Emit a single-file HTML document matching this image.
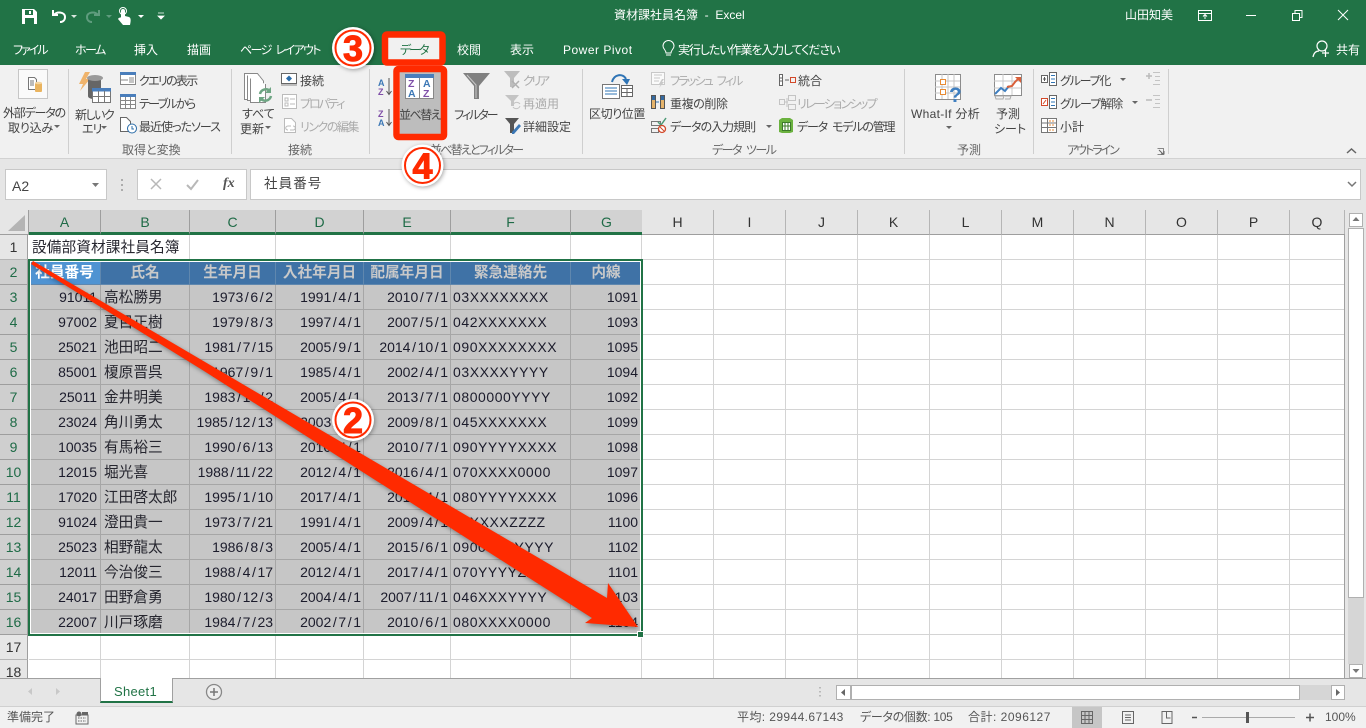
<!DOCTYPE html>
<html lang="ja"><head><meta charset="utf-8"><title>資材課社員名簿 - Excel</title>
<style>
html,body{margin:0;padding:0;width:1366px;height:728px;overflow:hidden;background:#e6e6e6}
body{position:relative;font-family:"Liberation Sans","Noto Sans CJK JP",sans-serif;font-size:12px;color:#444}
.b{position:absolute}
.t{position:absolute;white-space:nowrap;line-height:16px;margin-top:1px;font-family:"Liberation Sans","Noto Sans CJK JP",sans-serif;font-feature-settings:"palt";color:#444;font-size:12px}
.w{color:#fff}.g{color:#ababab}.c{color:#666}
.ch{position:absolute;top:210px;height:25px;line-height:24px;text-align:center;font-size:14px;color:#333;background:#e6e6e6;border-right:1px solid #b5b5b5;box-sizing:border-box;border-bottom:1px solid #9e9e9e}
.ch.s{background:#d2d2d2;color:#1f6b47;border-bottom:3px solid #217346;border-right-color:#9e9e9e}
.rh{position:absolute;left:0;width:28px;height:25px;line-height:24px;text-align:center;font-size:14px;color:#333;background:#e6e6e6;border-bottom:1px solid #b5b5b5;border-right:1px solid #9e9e9e;box-sizing:border-box}
.rh.s{background:#cfcfcf;color:#1f6b47;border-bottom-color:#9e9e9e}
table{position:absolute;left:29px;top:0;border-collapse:separate;border-spacing:0;table-layout:fixed;width:1316px}
td{height:25px;padding:0 3px;box-sizing:border-box;border-right:1px solid #d4d4d4;border-bottom:1px solid #d4d4d4;font-size:14px;line-height:24px;white-space:nowrap;overflow:hidden;color:#1b1b2b;text-align:left}
tr.d td.x{background:#c6c6c6;border-color:#a6a6a6}
td.n{text-align:right;padding-right:2px}
td.m{padding-right:3px}
td.f{padding-left:2px;letter-spacing:.55px}
td.j{font-size:14.67px;font-family:"Liberation Sans","Noto Sans CJK JP",sans-serif;line-height:22px;padding-top:2px;color:#26262f}
td i{font-style:normal;padding:0 1.6px}
tr.h td.u{background:#3f72a6;border-color:#5f87ae;font-weight:bold;color:#c9c9c9;text-align:center;font-size:14.67px;padding:2px 0 0;line-height:22px}
tr.h td.a{background:#4f93d2;color:#fff}
.v{position:absolute;width:1px;background:#cfcfcf}
</style></head><body>

<div class="b" style="left:0;top:0;width:1366px;height:65px;background:#217346"></div>
<div class="b" style="left:0;top:65px;width:1366px;height:93px;background:#f1f1f1;border-bottom:1px solid #d2d2d2"></div>
<div class="b" style="left:0;top:159px;width:1366px;height:51px;background:#e6e6e6"></div>
<div class="b" style="left:388px;top:37px;width:52px;height:28px;background:#f1f1f1"></div>
<div class="v" style="left:68px;top:69px;height:85px"></div>
<div class="v" style="left:231px;top:69px;height:85px"></div>
<div class="v" style="left:369px;top:69px;height:85px"></div>
<div class="v" style="left:582px;top:69px;height:85px"></div>
<div class="v" style="left:904px;top:69px;height:85px"></div>
<div class="v" style="left:1033px;top:69px;height:85px"></div>
<div class="v" style="left:1168px;top:69px;height:85px"></div>

<!-- title bar text -->
<div class="t w" style="left:614px;top:7px;margin-top:0">資材課社員名簿&nbsp; -&nbsp; Excel</div>
<div class="t w" style="left:1125px;top:7px;margin-top:0">山田知美</div>
<div class="t w" style="left:13px;top:41px;letter-spacing:-2px">ファイル</div>
<div class="t w" style="left:75px;top:41px;letter-spacing:-1.5px">ホーム</div>
<div class="t w" style="left:134px;top:41px">挿入</div>
<div class="t w" style="left:187px;top:41px">描画</div>
<div class="t w" style="left:240px;top:41px;letter-spacing:-1.6px;word-spacing:3px">ページ レイアウト</div>
<div class="t" style="left:400px;top:41px;color:#217346;letter-spacing:-2px">データ</div>
<div class="t w" style="left:457px;top:41px">校閲</div>
<div class="t w" style="left:510px;top:41px">表示</div>
<div class="t w" style="left:563px;top:41px;letter-spacing:.5px">Power Pivot</div>
<div class="t w" style="left:678px;top:41px;letter-spacing:-1.1px">実行したい作業を入力してください</div>
<div class="t w" style="left:1336px;top:41px">共有</div>

<!-- ribbon text -->
<div class="b" style="left:400px;top:72px;width:41px;height:62px;background:#bdbdbd"></div>
<div class="t" style="left:3px;top:104px;letter-spacing:-1.2px">外部データの</div>
<div class="t" style="left:8px;top:119px;letter-spacing:-.2px">取り込み</div>
<div class="t" style="left:75px;top:106px;letter-spacing:-1.5px">新しいク</div>
<div class="t" style="left:82px;top:120px;letter-spacing:-1px">エリ</div>
<div class="t" style="left:139px;top:72px;letter-spacing:-1.7px">クエリの表示</div>
<div class="t" style="left:139px;top:95px;letter-spacing:-1.7px">テーブルから</div>
<div class="t" style="left:139px;top:118px;letter-spacing:-1px">最近使ったソース</div>
<div class="t c" style="left:122px;top:141px">取得と変換</div>
<div class="t" style="left:242px;top:105px">すべて</div>
<div class="t" style="left:240px;top:120px">更新</div>
<div class="t" style="left:300px;top:72px">接続</div>
<div class="t g" style="left:300px;top:95px;letter-spacing:-2px">プロパティ</div>
<div class="t g" style="left:300px;top:118px;letter-spacing:-1.5px">リンクの編集</div>
<div class="t c" style="left:288px;top:141px">接続</div>
<div class="t" style="left:399px;top:106px;letter-spacing:-1.5px">並べ替え</div>
<div class="t" style="left:454px;top:106px;letter-spacing:-2px">フィルター</div>
<div class="t g" style="left:523px;top:72px;letter-spacing:-2.4px">クリア</div>
<div class="t g" style="left:523px;top:95px">再適用</div>
<div class="t" style="left:523px;top:118px">詳細設定</div>
<div class="t c" style="left:430px;top:141px;letter-spacing:-1.8px">並べ替えとフィルター</div>
<div class="t" style="left:589px;top:105px;letter-spacing:-.4px">区切り位置</div>
<div class="t g" style="left:670px;top:72px;letter-spacing:-1.8px;word-spacing:3px">フラッシュ フィル</div>
<div class="t" style="left:670px;top:95px;letter-spacing:-.4px">重複の削除</div>
<div class="t" style="left:670px;top:118px;letter-spacing:-1px">データの入力規則</div>
<div class="t" style="left:798px;top:72px">統合</div>
<div class="t g" style="left:797px;top:95px;letter-spacing:-1.7px">リレーションシップ</div>
<div class="t" style="left:797px;top:118px;letter-spacing:-1.2px;word-spacing:3px">データ モデルの管理</div>
<div class="t c" style="left:712px;top:141px;letter-spacing:-1.5px;word-spacing:3px">データ ツール</div>
<div class="t" style="left:911px;top:105px;letter-spacing:.3px">What-If 分析</div>
<div class="t" style="left:996px;top:105px">予測</div>
<div class="t" style="left:994px;top:120px">シート</div>
<div class="t c" style="left:957px;top:141px">予測</div>
<div class="t" style="left:1060px;top:72px;letter-spacing:-1.2px">グループ化</div>
<div class="t" style="left:1060px;top:95px;letter-spacing:-1px">グループ解除</div>
<div class="t" style="left:1060px;top:118px">小計</div>
<div class="t c" style="left:1067px;top:141px;letter-spacing:-2px">アウトライン</div>

<!-- formula bar -->
<div class="b" style="left:5px;top:169px;width:102px;height:31px;background:#fff;border:1px solid #c8c8c8;box-sizing:border-box"></div>
<div class="b" style="left:137px;top:169px;width:110px;height:31px;background:#fff;border:1px solid #c8c8c8;box-sizing:border-box"></div>
<div class="b" style="left:250px;top:169px;width:1111px;height:31px;background:#fff;border:1px solid #c8c8c8;box-sizing:border-box"></div>
<div class="t" style="left:12px;top:178px;margin-top:0;font-size:14px;color:#444">A2</div>
<div class="t" style="left:264px;top:176px;margin-top:0;font-size:13.5px;letter-spacing:1.1px;color:#444">社員番号</div>
<div class="t" style="left:223px;top:176px;margin-top:0;font-family:'Liberation Serif',serif;font-style:italic;font-weight:bold;font-size:14px;color:#555">fx</div>

<!-- column headers -->
<div class="b" style="left:0;top:210px;width:29px;height:25px;background:#e6e6e6;border-right:1px solid #9e9e9e;border-bottom:1px solid #9e9e9e;box-sizing:border-box"></div>
<div class="ch s" style="left:29px;width:72px">A</div>
<div class="ch s" style="left:101px;width:89px">B</div>
<div class="ch s" style="left:190px;width:86px">C</div>
<div class="ch s" style="left:276px;width:88px">D</div>
<div class="ch s" style="left:364px;width:87px">E</div>
<div class="ch s" style="left:451px;width:120px">F</div>
<div class="ch s" style="left:571px;width:71px;border-right:0">G</div>
<div class="ch" style="left:642px;width:72px">H</div>
<div class="ch" style="left:714px;width:72px">I</div>
<div class="ch" style="left:786px;width:72px">J</div>
<div class="ch" style="left:858px;width:72px">K</div>
<div class="ch" style="left:930px;width:72px">L</div>
<div class="ch" style="left:1002px;width:72px">M</div>
<div class="ch" style="left:1074px;width:72px">N</div>
<div class="ch" style="left:1146px;width:72px">O</div>
<div class="ch" style="left:1218px;width:72px">P</div>
<div class="ch" style="left:1290px;width:55px">Q</div>

<!-- grid -->
<div class="b" style="left:0;top:235px;width:1345px;height:443px;overflow:hidden;background:#fff">
<div class="rh" style="top:0">1</div><div class="rh s" style="top:25px">2</div><div class="rh s" style="top:50px">3</div><div class="rh s" style="top:75px">4</div><div class="rh s" style="top:100px">5</div><div class="rh s" style="top:125px">6</div><div class="rh s" style="top:150px">7</div><div class="rh s" style="top:175px">8</div><div class="rh s" style="top:200px">9</div><div class="rh s" style="top:225px">10</div><div class="rh s" style="top:250px">11</div><div class="rh s" style="top:275px">12</div><div class="rh s" style="top:300px">13</div><div class="rh s" style="top:325px">14</div><div class="rh s" style="top:350px">15</div><div class="rh s" style="top:375px">16</div><div class="rh" style="top:400px">17</div><div class="rh" style="top:425px">18</div>
<table>
<colgroup><col style="width:72px"><col style="width:89px"><col style="width:86px"><col style="width:88px"><col style="width:87px"><col style="width:120px"><col style="width:71px"><col style="width:72px"><col style="width:72px"><col style="width:72px"><col style="width:72px"><col style="width:72px"><col style="width:72px"><col style="width:72px"><col style="width:72px"><col style="width:72px"><col style="width:55px"></colgroup>
<tr><td class="j" colspan="2" style="overflow:visible;letter-spacing:.1px">設備部資材課社員名簿</td><td></td><td></td><td></td><td></td><td></td><td></td><td></td><td></td><td></td><td></td><td></td><td></td><td></td><td></td><td></td></tr>
<tr class="h"><td class="u a">社員番号</td><td class="u">氏名</td><td class="u">生年月日</td><td class="u">入社年月日</td><td class="u">配属年月日</td><td class="u">緊急連絡先</td><td class="u">内線</td><td></td><td></td><td></td><td></td><td></td><td></td><td></td><td></td><td></td><td></td></tr>
<tr class="d"><td class="x n m">91011</td><td class="x j">高松勝男</td><td class="x n">1973<i>/</i>6<i>/</i>2</td><td class="x n">1991<i>/</i>4<i>/</i>1</td><td class="x n">2010<i>/</i>7<i>/</i>1</td><td class="x f">03XXXXXXXX</td><td class="x n m">1091</td><td></td><td></td><td></td><td></td><td></td><td></td><td></td><td></td><td></td><td></td></tr>
<tr class="d"><td class="x n m">97002</td><td class="x j">夏目正樹</td><td class="x n">1979<i>/</i>8<i>/</i>3</td><td class="x n">1997<i>/</i>4<i>/</i>1</td><td class="x n">2007<i>/</i>5<i>/</i>1</td><td class="x f">042XXXXXXX</td><td class="x n m">1093</td><td></td><td></td><td></td><td></td><td></td><td></td><td></td><td></td><td></td><td></td></tr>
<tr class="d"><td class="x n m">25021</td><td class="x j">池田昭二</td><td class="x n">1981<i>/</i>7<i>/</i>15</td><td class="x n">2005<i>/</i>9<i>/</i>1</td><td class="x n">2014<i>/</i>10<i>/</i>1</td><td class="x f">090XXXXXXXX</td><td class="x n m">1095</td><td></td><td></td><td></td><td></td><td></td><td></td><td></td><td></td><td></td><td></td></tr>
<tr class="d"><td class="x n m">85001</td><td class="x j">榎原晋呉</td><td class="x n">1967<i>/</i>9<i>/</i>1</td><td class="x n">1985<i>/</i>4<i>/</i>1</td><td class="x n">2002<i>/</i>4<i>/</i>1</td><td class="x f">03XXXXYYYY</td><td class="x n m">1094</td><td></td><td></td><td></td><td></td><td></td><td></td><td></td><td></td><td></td><td></td></tr>
<tr class="d"><td class="x n m">25011</td><td class="x j">金井明美</td><td class="x n">1983<i>/</i>10<i>/</i>2</td><td class="x n">2005<i>/</i>4<i>/</i>1</td><td class="x n">2013<i>/</i>7<i>/</i>1</td><td class="x f">0800000YYYY</td><td class="x n m">1092</td><td></td><td></td><td></td><td></td><td></td><td></td><td></td><td></td><td></td><td></td></tr>
<tr class="d"><td class="x n m">23024</td><td class="x j">角川勇太</td><td class="x n">1985<i>/</i>12<i>/</i>13</td><td class="x n">2003<i>/</i>4<i>/</i>1</td><td class="x n">2009<i>/</i>8<i>/</i>1</td><td class="x f">045XXXXXXX</td><td class="x n m">1099</td><td></td><td></td><td></td><td></td><td></td><td></td><td></td><td></td><td></td><td></td></tr>
<tr class="d"><td class="x n m">10035</td><td class="x j">有馬裕三</td><td class="x n">1990<i>/</i>6<i>/</i>13</td><td class="x n">2010<i>/</i>4<i>/</i>1</td><td class="x n">2010<i>/</i>7<i>/</i>1</td><td class="x f">090YYYYXXXX</td><td class="x n m">1098</td><td></td><td></td><td></td><td></td><td></td><td></td><td></td><td></td><td></td><td></td></tr>
<tr class="d"><td class="x n m">12015</td><td class="x j">堀光喜</td><td class="x n">1988<i>/</i>11<i>/</i>22</td><td class="x n">2012<i>/</i>4<i>/</i>1</td><td class="x n">2016<i>/</i>4<i>/</i>1</td><td class="x f">070XXXX0000</td><td class="x n m">1097</td><td></td><td></td><td></td><td></td><td></td><td></td><td></td><td></td><td></td><td></td></tr>
<tr class="d"><td class="x n m">17020</td><td class="x j">江田啓太郎</td><td class="x n">1995<i>/</i>1<i>/</i>10</td><td class="x n">2017<i>/</i>4<i>/</i>1</td><td class="x n">2017<i>/</i>4<i>/</i>1</td><td class="x f">080YYYYXXXX</td><td class="x n m">1096</td><td></td><td></td><td></td><td></td><td></td><td></td><td></td><td></td><td></td><td></td></tr>
<tr class="d"><td class="x n m">91024</td><td class="x j">澄田貴一</td><td class="x n">1973<i>/</i>7<i>/</i>21</td><td class="x n">1991<i>/</i>4<i>/</i>1</td><td class="x n">2009<i>/</i>4<i>/</i>1</td><td class="x f">03XXXXZZZZ</td><td class="x n m">1100</td><td></td><td></td><td></td><td></td><td></td><td></td><td></td><td></td><td></td><td></td></tr>
<tr class="d"><td class="x n m">25023</td><td class="x j">相野龍太</td><td class="x n">1986<i>/</i>8<i>/</i>3</td><td class="x n">2005<i>/</i>4<i>/</i>1</td><td class="x n">2015<i>/</i>6<i>/</i>1</td><td class="x f">09000XXYYYY</td><td class="x n m">1102</td><td></td><td></td><td></td><td></td><td></td><td></td><td></td><td></td><td></td><td></td></tr>
<tr class="d"><td class="x n m">12011</td><td class="x j">今治俊三</td><td class="x n">1988<i>/</i>4<i>/</i>17</td><td class="x n">2012<i>/</i>4<i>/</i>1</td><td class="x n">2017<i>/</i>4<i>/</i>1</td><td class="x f">070YYYYZZZZ</td><td class="x n m">1101</td><td></td><td></td><td></td><td></td><td></td><td></td><td></td><td></td><td></td><td></td></tr>
<tr class="d"><td class="x n m">24017</td><td class="x j">田野倉勇</td><td class="x n">1980<i>/</i>12<i>/</i>3</td><td class="x n">2004<i>/</i>4<i>/</i>1</td><td class="x n">2007<i>/</i>11<i>/</i>1</td><td class="x f">046XXXYYYY</td><td class="x n m">1103</td><td></td><td></td><td></td><td></td><td></td><td></td><td></td><td></td><td></td><td></td></tr>
<tr class="d"><td class="x n m">22007</td><td class="x j">川戸琢磨</td><td class="x n">1984<i>/</i>7<i>/</i>23</td><td class="x n">2002<i>/</i>7<i>/</i>1</td><td class="x n">2010<i>/</i>6<i>/</i>1</td><td class="x f">080XXXX0000</td><td class="x n m">1104</td><td></td><td></td><td></td><td></td><td></td><td></td><td></td><td></td><td></td><td></td></tr>
<tr><td></td><td></td><td></td><td></td><td></td><td></td><td></td><td></td><td></td><td></td><td></td><td></td><td></td><td></td><td></td><td></td><td></td></tr>
<tr><td></td><td></td><td></td><td></td><td></td><td></td><td></td><td></td><td></td><td></td><td></td><td></td><td></td><td></td><td></td><td></td><td></td></tr>
</table>
</div>
<div class="b" style="left:1344px;top:234px;width:1px;height:444px;background:#a0a0a0"></div>

<!-- selection -->
<div class="b" style="left:28px;top:259px;width:615px;height:377px;border:2px solid #217346;box-sizing:border-box;outline:1px solid #fff;outline-offset:-3px"></div>
<div class="b" style="left:637px;top:631px;width:7px;height:7px;background:#217346;border:1px solid #fff;box-sizing:border-box"></div>

<!-- sheet tabs / scroll -->
<div class="b" style="left:0;top:678px;width:1366px;height:28px;background:#e6e6e6;border-top:1px solid #a0a0a0;box-sizing:border-box"></div>
<div class="b" style="left:100px;top:678px;width:73px;height:25px;background:#fff;border-left:1px solid #a0a0a0;border-right:1px solid #a0a0a0;border-bottom:2px solid #217346;box-sizing:border-box"></div>
<div class="t" style="left:114px;top:683px;font-size:13px;color:#217346;letter-spacing:.3px">Sheet1</div>
<div class="b" style="left:1345px;top:210px;width:21px;height:468px;background:#e6e6e6"></div>
<div class="b" style="left:1349px;top:213px;width:14px;height:14px;background:#fff;border:1px solid #b0b0b0;box-sizing:border-box"></div>
<div class="b" style="left:1348px;top:228px;width:16px;height:370px;background:#fff;border:1px solid #b0b0b0;box-sizing:border-box"></div>
<div class="b" style="left:1348px;top:598px;width:16px;height:66px;background:#d6d6d6"></div>
<div class="b" style="left:1349px;top:664px;width:14px;height:14px;background:#fff;border:1px solid #b0b0b0;box-sizing:border-box"></div>
<div class="b" style="left:836px;top:685px;width:15px;height:15px;background:#fff;border:1px solid #b0b0b0;box-sizing:border-box"></div>
<div class="b" style="left:851px;top:685px;width:449px;height:15px;background:#fff;border:1px solid #b0b0b0;box-sizing:border-box"></div>
<div class="b" style="left:1300px;top:685px;width:31px;height:15px;background:#d6d6d6"></div>
<div class="b" style="left:1331px;top:685px;width:14px;height:15px;background:#fff;border:1px solid #b0b0b0;box-sizing:border-box"></div>

<!-- status -->
<div class="b" style="left:0;top:706px;width:1366px;height:22px;background:#f1f1f1;border-top:1px solid #d0d0d0;box-sizing:border-box"></div>
<div class="b" style="left:1072px;top:707px;width:30px;height:21px;background:#c6c6c6"></div>
<div class="t" style="left:7px;top:709px;margin-top:0;color:#555">準備完了</div>
<div class="t" style="left:737px;top:709px;margin-top:0;color:#555;letter-spacing:.4px">平均: 29944.67143</div>
<div class="t" style="left:860px;top:709px;margin-top:0;color:#555;letter-spacing:-.3px">データの個数: 105</div>
<div class="t" style="left:968px;top:709px;margin-top:0;color:#555;letter-spacing:.5px">合計: 2096127</div>
<div class="t" style="left:1325px;top:709px;margin-top:0;color:#555">100%</div>

<!-- icons -->
<svg class="b" style="left:0;top:0" width="1366" height="728" viewBox="0 0 1366 728" fill="none">
<!-- QAT -->
<path d="M22 9h12l3 3v12H22z" fill="#fff"/><rect x="25" y="10" width="8" height="5" fill="#217346"/><rect x="25" y="18" width="9" height="6" fill="#217346"/><rect x="29" y="11" width="2" height="3" fill="#fff"/>
<path d="M53 10v5h5M54 15c3-4 11-3 11 2 0 3-2 5-5 5" stroke="#fff" stroke-width="2"/>
<path d="M71 15h6l-3 3z" fill="#d8e6de"/>
<path d="M99 10v5h-5M98 15c-3-4-11-3-11 2 0 3 2 5 5 5" stroke="#5f9c7e" stroke-width="2"/>
<path d="M106 15h6l-3 3z" fill="#5f9c7e"/>
<path d="M121 17v-6a2 2 0 0 1 4 0v5l4 1c2 1 2 3 1 8h-7l-5-6c1-2 3-1 3-2z" fill="#fff"/><circle cx="123" cy="11" r="3.5" stroke="#fff"/>
<path d="M138 15h6l-3 3z" fill="#fff"/>
<path d="M158 13h6M158 16h6l-3 3z" stroke="#fff" fill="#fff" stroke-width=".8"/>
<!-- window -->
<path d="M1198.500 10.500h13v10h-13zM1198 13.500h14M1205 19v-4M1203 16.500l2-2 2 2" stroke="#fff"/>
<path d="M1246 15.500h10" stroke="#fff"/>
<path d="M1292.500 13.500h7v7h-7zM1295 13v-2.500h7v7h-2.500" stroke="#fff"/>
<path d="M1338 10l10 10M1348 10l-10 10" stroke="#fff"/>
<circle cx="1322" cy="46" r="5" stroke="#fff" stroke-width="1.200"/><path d="M1313 57c1-5 4-6 6-6M1322 53h7M1325.500 50v7" stroke="#fff" stroke-width="1.200"/>
<path d="M666 53c0-3-3-4-3-7a5.500 5.500 0 0 1 11 0c0 3-3 4-3 7zM666 55h5" stroke="#fff"/>
<!-- external data -->
<rect x="18.500" y="69.500" width="29" height="29" fill="#fafafa" stroke="#c6c6c6"/>
<path d="M28.500 77.500h6l2 2v10h-8z" fill="#fff" stroke="#777"/><path d="M30 81h4M30 83h4M30 85h4" stroke="#777"/>
<rect x="35" y="83" width="7" height="9" rx="1" fill="#eab45f"/><ellipse cx="38.500" cy="83" rx="3.500" ry="1.300" fill="#f5d59f"/>
<path d="M54 125h6l-3 3z" fill="#666"/>
<!-- new query -->
<path d="M85 72l-6 12h4l-3 7 10-12h-4l4-7z" fill="#f0b46c"/>
<path d="M88 79v17c0 2 3 3 6 3s7-1 7-3V79z" fill="#666"/><ellipse cx="95" cy="78" rx="8" ry="3" fill="#9a9a9a"/>
<rect x="92.500" y="88.500" width="18" height="14" fill="#fff" stroke="#777"/><rect x="92" y="88" width="19" height="3.500" fill="#4a7ebb"/><path d="M98.500 91v11M104.500 91v11M92 96.500h18" stroke="#777"/>
<path d="M101 126h6l-3 3z" fill="#666"/>
<!-- query / table / recent -->
<rect x="120.500" y="72.500" width="15" height="12" fill="#fff" stroke="#888"/><rect x="120" y="72" width="16" height="3" fill="#4a7ebb"/><path d="M129 78h5M129 80h5M129 82h5" stroke="#888"/><path d="M120 80h8" stroke="#888"/>
<rect x="120.500" y="94.500" width="15" height="14" fill="#fff" stroke="#888"/><rect x="120" y="94" width="16" height="3" fill="#4a7ebb"/><path d="M125.500 97v11M130.500 97v11M120 100.500h15M120 104.500h15" stroke="#888"/>
<path d="M120.500 117.500h6l4 4v10h-10z" fill="#fff" stroke="#666"/><circle cx="132" cy="128.500" r="4.500" fill="#fff" stroke="#2a6ca8"/><path d="M132 126v3h2" stroke="#2a6ca8"/>
<!-- refresh -->
<path d="M244.500 73.500h13l3 4v22h-16z" fill="#fff" stroke="#888"/><path d="M247.500 75.500v25h16V81l-4-5" fill="#fff" stroke="#888"/><path d="M250.500 78.500v24h15V84" fill="#fff" stroke="#888"/>
<path d="M260 94a6 6 0 0 1 10-3" stroke="#6ea583" stroke-width="2.500"/><path d="M271 87v6h-6z" fill="#6ea583"/><path d="M271 96a6 6 0 0 1-10 3" stroke="#6ea583" stroke-width="2.500"/><path d="M259 103v-6h6z" fill="#6ea583"/>
<path d="M265 126h6l-3 3z" fill="#666"/>
<!-- connections -->
<rect x="281.500" y="73.500" width="15" height="10" fill="#fff" stroke="#666"/><path d="M289 75.500l3 3-3 3-3-3z" fill="#2a6ca8"/><path d="M281 85h16" stroke="#888"/>
<rect x="282.500" y="94.500" width="14" height="14" fill="#fff" stroke="#bbb"/><path d="M285 98h3v3h-3zM285 103h3v3h-3zM290 99h5M290 104h5" stroke="#bbb"/>
<path d="M284.500 118.500h7l4 4v10h-11z" fill="#fff" stroke="#bbb"/><path d="M288 130c-3 0-3-4 0-4h3M293 126c3 0 3 4 0 4h-3" stroke="#bbb"/>
<!-- sort -->
<g font-family="Liberation Sans,sans-serif" font-weight="bold" font-size="9">
<text x="378" y="86" fill="#3b77b5">A</text><text x="378" y="95" fill="#7f4fa8">Z</text>
<text x="378" y="117" fill="#7f4fa8">Z</text><text x="378" y="126" fill="#3b77b5">A</text></g>
<path d="M389 78v16M386.500 91l2.500 3.500 2.500-3.500M389 109v16M386.500 122l2.500 3.500 2.500-3.500" stroke="#555"/>
<rect x="405.500" y="75.500" width="28" height="23" fill="#fff" stroke="#888"/><rect x="405" y="74" width="29" height="4" fill="#4a7ebb"/><path d="M419.500 78v20" stroke="#888"/>
<g font-family="Liberation Sans,sans-serif" font-weight="bold" font-size="10.500">
<text x="408" y="87" fill="#7f4fa8">Z</text><text x="408" y="97" fill="#3b77b5">A</text><text x="423" y="87" fill="#3b77b5">A</text><text x="423" y="97" fill="#7f4fa8">Z</text></g>
<path d="M463 73h27l-11 13v13h-5V86z" fill="#808080"/><path d="M467 75l9 10v13" stroke="#c8c8c8" fill="none"/>
<path d="M504 71h16l-6 7v9h-4v-9z" fill="#bdbdbd"/><path d="M512 81l7 7M519 81l-7 7" stroke="#b0b0b0" stroke-width="1.500"/>
<path d="M505 95h14l-5 6v5h-3v-5z" fill="#c4c4c4"/><path d="M513 105a4 4 0 0 1 7-1M520 106a4 4 0 0 1-7 1" stroke="#c4c4c4"/>
<path d="M505 118h14l-5 6v9h-4v-9z" fill="#555"/><path d="M512 132l7-8 2 2-7 8h-2z" fill="#3b77b5"/>
<!-- text to columns -->
<rect x="602.500" y="84.500" width="17" height="14" fill="#fff" stroke="#777"/><path d="M605 88h12M605 91h12M605 94h12" stroke="#2f74b5"/>
<rect x="621.500" y="85.500" width="11" height="11" fill="#fff" stroke="#666"/><path d="M621 88.500h12M627 88v8M621 92.500h12" stroke="#666"/>
<path d="M612 82c2-8 11-9 14-3" stroke="#2f74b5" stroke-width="2"/><path d="M622 79h8l-3 6z" fill="#2f74b5"/>
<!-- flash etc -->
<rect x="651.500" y="72.500" width="13" height="12" stroke="#c8c8c8" fill="#fafafa"/><path d="M654 75h8M654 78h6M654 81h5" stroke="#c8c8c8"/><path d="M662 79l-3 5h2l-2 4 5-6h-2l2-3z" fill="#c8c8c8"/>
<rect x="651" y="95" width="5" height="14" fill="#e5b36a"/><rect x="651" y="95" width="5" height="5" fill="#356aa0"/><rect x="660" y="95" width="5" height="14" fill="#e5b36a"/><rect x="660" y="95" width="5" height="5" fill="#356aa0"/><path d="M656 102h3" stroke="#2f74b5"/><rect x="651.500" y="95.500" width="4" height="13" stroke="#555"/><rect x="660.500" y="95.500" width="4" height="13" stroke="#555"/>
<path d="M651.500 121.500h9v4h-9zM651.500 128.500h7v4h-7z" stroke="#777"/><path d="M658 122l3 3 5-7" stroke="#4c9a76" stroke-width="1.500"/><circle cx="662" cy="129" r="3.500" fill="#fff" stroke="#d2492a" stroke-width="1.300"/><path d="M660 127l4 4" stroke="#d2492a"/>
<path d="M766 125h6l-3 3z" fill="#666"/>
<rect x="779.500" y="74.500" width="3" height="11" stroke="#666" fill="#fff"/><path d="M779 78h4M779 81h4M785 80h4" stroke="#666"/><rect x="790.500" y="77.500" width="5" height="5" stroke="#d2492a"/>
<rect x="779.500" y="99.500" width="5" height="5" stroke="#c4c4c4"/><rect x="788.500" y="95.500" width="7" height="5" stroke="#c4c4c4"/><rect x="788.500" y="104.500" width="7" height="5" stroke="#c4c4c4"/><path d="M785 102h3M787 98v9" stroke="#c4c4c4"/>
<path d="M779 120l3-2h8l3 2v12l-3 1h-8l-3-1z" fill="#6bb23f"/><rect x="782.500" y="122.500" width="8" height="8" fill="#fff" stroke="#3c7a2a"/><path d="M785 122v8M788 122v8M782 126h8" stroke="#3c7a2a"/>
<!-- what if -->
<rect x="935.500" y="74.500" width="25" height="25" fill="#fff" stroke="#8c8c8c"/><path d="M942 74v25M948 74v25M954 74v25M935 81h25M935 87h25M935 93h25" stroke="#c4c4c4"/>
<rect x="940.500" y="79.500" width="5" height="5" fill="#fff" stroke="#e88b34"/><rect x="940.500" y="89.500" width="5" height="5" fill="#fff" stroke="#e88b34"/>
<text x="949" y="102" font-family="Liberation Sans,sans-serif" font-weight="bold" font-size="21" fill="#3f7fc0">?</text>
<path d="M946 126h6l-3 3z" fill="#666"/>
<!-- forecast -->
<rect x="994.500" y="74.500" width="27" height="21" fill="#fff" stroke="#8c8c8c"/><path d="M1003 74v21M1012 74v21M994 81h27M994 88h27" stroke="#c8c8c8"/>
<path d="M995 94l6-6 4 3 4-5" stroke="#3f7fc0" stroke-width="2"/><path d="M1007 87l5-1 3-4 4-4" stroke="#d9603a" stroke-width="2"/><path d="M1015 77h6v6z" fill="#d9603a"/>
<path d="M995 96h9l-1 3h-7zM1005 96h6l-1 3h-5" stroke="#aaa"/>
<!-- outline -->
<rect x="1041.500" y="75.500" width="6" height="7" fill="#fff" stroke="#666"/><path d="M1043 79h3M1044.500 77v4" stroke="#555"/><rect x="1049.500" y="72.500" width="7" height="13" fill="#fff" stroke="#666"/><path d="M1051 75.500h4M1051 79h4M1051 82.500h4" stroke="#2f74b5"/>
<rect x="1041.500" y="98.500" width="6" height="7" fill="#fff" stroke="#d2492a"/><path d="M1043 104l3-4" stroke="#d2492a"/><rect x="1049.500" y="95.500" width="7" height="13" fill="#fff" stroke="#666"/><path d="M1051 98.500h4M1051 102h4M1051 105.500h4" stroke="#2f74b5"/>
<rect x="1041.500" y="118.500" width="15" height="14" fill="#fff" stroke="#777"/><path d="M1047.500 118v14M1041 123h15M1041 127.500h15" stroke="#777"/><path d="M1049 121h6M1049 125h6M1049 130h6" stroke="#e88b34" stroke-dasharray="2 1"/>
<path d="M1120 78h6l-3 3z" fill="#666"/><path d="M1132 101h6l-3 3z" fill="#666"/>
<path d="M1146 76h6M1149 73v6" stroke="#bbb" stroke-width="1.500"/><path d="M1153 72.500h7M1155 76.500h5M1155 80.500h5M1153 84.500h7" stroke="#c4c4c4"/>
<path d="M1146 100h6" stroke="#bbb" stroke-width="1.500"/><path d="M1153 95.500h7M1155 99.500h5M1155 103.500h5M1153 107.500h7" stroke="#c4c4c4"/>
<path d="M1157.500 148.500h6v6h-6" stroke="#888" fill="none"/><path d="M1159 150l4 4M1164 151v3h-3" stroke="#666"/>
<path d="M1347 153l4.500-4 4.500 4" stroke="#666" stroke-width="1.500"/>
<!-- formula -->
<path d="M92 183h7l-3.500 4z" fill="#777"/>
<path d="M122 179v2M122 184v2M122 189v2" stroke="#999" stroke-width="1.500"/>
<path d="M151 179l10 10M161 179l-10 10" stroke="#b8b8b8" stroke-width="1.500"/>
<path d="M187 185l4 4 7-9" stroke="#b8b8b8" stroke-width="2"/>
<path d="M1348 182l4 4 4-4" stroke="#777" stroke-width="1.500"/>
<!-- corner -->
<path d="M25 215v16H8z" fill="#b4b4b4"/>
<!-- tabs -->
<path d="M32 688v7l-4-3.500z" fill="#c8c8c8"/><path d="M56 688v7l4-3.500z" fill="#c8c8c8"/>
<circle cx="214" cy="692" r="7.500" stroke="#888" stroke-width="1.300" fill="#eee"/><path d="M210 692h8M214 688v8" stroke="#777" stroke-width="1.500"/>
<path d="M820 687v1.500M820 691v1.500M820 695v1.500" stroke="#aaa" stroke-width="1.500"/>
<path d="M1352.500 221h7l-3.500-4z" fill="#777"/><path d="M1352.500 669h7l-3.500 4z" fill="#777"/>
<path d="M841 692.500l4-3.500v7z" fill="#666"/><path d="M1340 692.500l-4-3.500v7z" fill="#666"/>
<!-- status icons -->
<circle cx="79" cy="714" r="2.500" fill="#666"/><rect x="76" y="715" width="12" height="9" fill="none" stroke="#666"/><path d="M82 712h6v3h-6z" fill="#666"/><path d="M78 718h8M78 721h8" stroke="#666" stroke-dasharray="1.500 1"/>
<rect x="1081.500" y="711.500" width="11" height="12" stroke="#666"/><path d="M1085 711v12M1089 711v12M1081 715.500h11M1081 719.500h11" stroke="#666"/>
<rect x="1122.500" y="711.500" width="11" height="12" stroke="#666"/><path d="M1125 715h6M1125 717.500h6M1125 720h6" stroke="#666"/>
<path d="M1162 711.500v12h10v-12zM1166.500 711v7h4" stroke="#666" fill="none"/>
<path d="M1192 717.500h5M1306 717.500h8M1310 713.500v8" stroke="#555" stroke-width="1.500"/>
<path d="M1202 717.500h93" stroke="#aaa"/><rect x="1246" y="712" width="3" height="11" fill="#555"/>
<!-- red overlay -->
<rect x="385" y="34.500" width="57.500" height="28" rx="2" stroke="#ff2a00" stroke-width="6.500"/>
<rect x="396.500" y="69" width="47.500" height="68" rx="2" stroke="#ff2a00" stroke-width="6.500"/>
<path d="M33 261L607 598L608 583L638 627L585 623L592 618L204 371L31 264z" fill="#ff2a00" style="filter:drop-shadow(1px 2px 2px rgba(0,0,0,.35))"/>
<g style="filter:drop-shadow(1px 1px 2px rgba(0,0,0,.35))"><circle cx="353" cy="48" r="21" fill="#fff"/><circle cx="422.500" cy="165.500" r="21" fill="#fff"/><circle cx="353" cy="420" r="21" fill="#fff"/></g>
<g stroke="#ff2a00" stroke-width="2"><circle cx="353" cy="48" r="17.500"/><circle cx="422.500" cy="165.500" r="17.500"/><circle cx="353" cy="420" r="17.500"/></g>
<g font-family="Liberation Sans,sans-serif" font-weight="bold" font-size="36" fill="#ff2a00" text-anchor="middle" stroke="#ff2a00" stroke-width="1"><text x="353" y="61">3</text><text x="422.500" y="178.500">4</text><text x="353" y="433">2</text></g>
</svg>
</body></html>
